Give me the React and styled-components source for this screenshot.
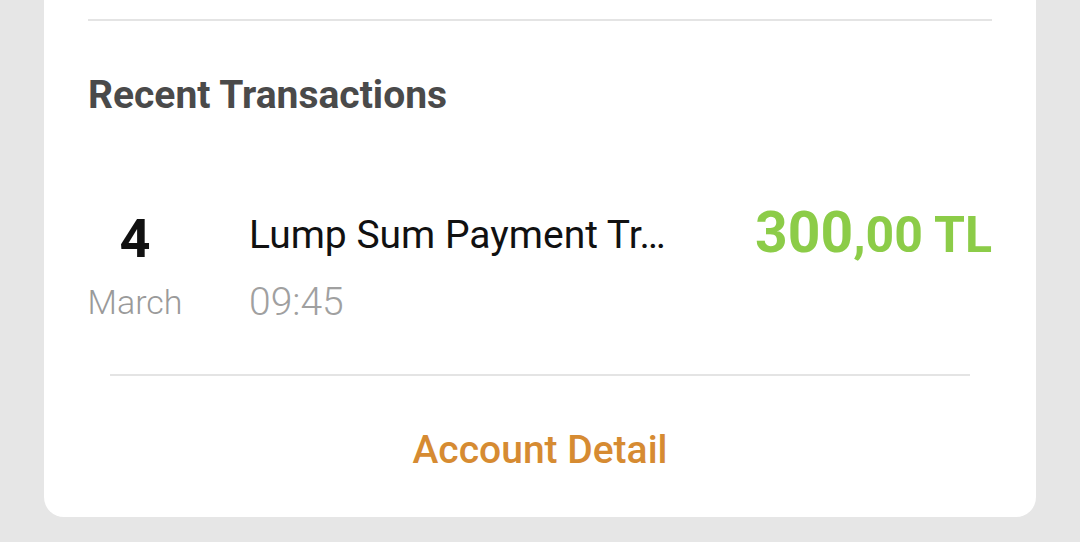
import styled, { createGlobalStyle } from 'styled-components';

const GlobalStyle = createGlobalStyle`
  html, body {
    margin: 0;
    padding: 0;
    background: #e6e6e6;
    font-family: Roboto, "Liberation Sans", sans-serif;
  }
`;

const Page = styled('div')`
  width: 1080px;
  height: 542px;
  background: #e6e6e6;
  padding: 0 44px;
  box-sizing: border-box;
`;

const Card = styled('div')`
  background: #ffffff;
  border-radius: 0 0 20px 20px;
  padding: 19px 44px 43px;
`;

const Divider = styled('div')`
  height: 2px;
  background: #e4e4e4;
  margin: ${p => p.$inset ? '0 22px' : '0'};
`;

const Title = styled('h2')`
  margin: 52px 0 0;
  font-size: 39px;
  line-height: 44px;
  font-weight: 700;
  color: #4a4a4a;
`;

const Row = styled('div')`
  display: grid;
  grid-template-columns: 94px 1fr auto;
  column-gap: 67px;
  align-items: start;
  margin-top: 92px;
`;

const Day = styled('div')`
  display: flex;
  flex-direction: column;
  align-items: center;
`;

const DayNum = styled('div')`
  font-size: 54px;
  line-height: 60px;
  font-weight: 700;
  color: #111;
`;

const Month = styled('div')`
  margin-top: 13px;
  font-size: 34px;
  line-height: 40px;
  font-weight: 300;
  color: #9a9a9a;
`;

const Info = styled('div')`
  display: flex;
  flex-direction: column;
  min-width: 0;
  padding-top: 2px;
`;

const Name = styled('div')`
  font-size: 39px;
  line-height: 48px;
  color: #111;
  white-space: nowrap;
  overflow: hidden;
  text-overflow: ellipsis;
`;

const Time = styled('div')`
  margin-top: 20px;
  font-size: 39px;
  line-height: 46px;
  font-weight: 300;
  color: #a0a0a0;
`;

const Amount = styled('div')`
  margin-top: -8px;
  font-size: 57px;
  line-height: 64px;
  font-weight: 700;
  color: #8ccc48;
  white-space: nowrap;
`;

const Fraction = styled('span')`
  font-size: 50px;
`;

const Bottom = styled('div')`
  margin-top: 49px;
`;

const DetailLink = styled('div')`
  margin-top: 50px;
  text-align: center;
  font-size: 39px;
  line-height: 48px;
  font-weight: 500;
  color: #d68b32;
`;

function App() {
  return (
    <Page>
      <GlobalStyle />
      <Card>
        <Divider />
        <Title>Recent Transactions</Title>
        <Row>
          <Day>
            <DayNum>4</DayNum>
            <Month>March</Month>
          </Day>
          <Info>
            <Name>Lump Sum Payment Tr…</Name>
            <Time>09:45</Time>
          </Info>
          <Amount>300<Fraction>,00 TL</Fraction></Amount>
        </Row>
        <Bottom>
          <Divider $inset />
        </Bottom>
        <DetailLink>Account Detail</DetailLink>
      </Card>
    </Page>
  );
}

export default App;
